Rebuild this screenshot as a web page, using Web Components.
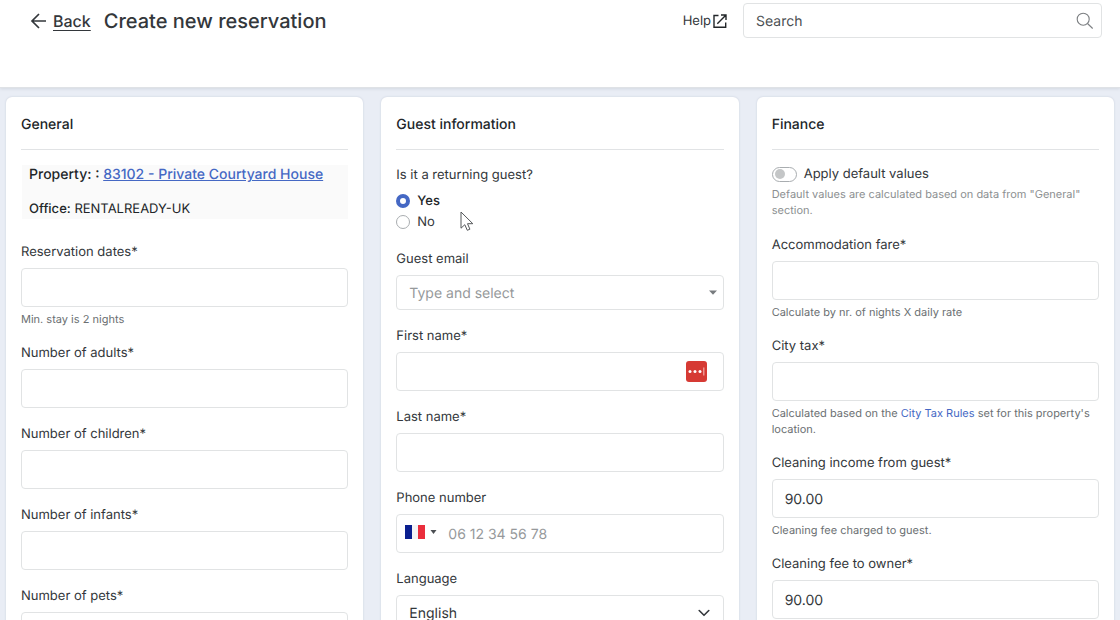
<!DOCTYPE html>
<html lang="en">
<head>
<meta charset="utf-8">
<meta name="viewport" content="width=device-width, initial-scale=1">
<title>Create new reservation</title>
<style>
	body {
		margin: 0;
		font-family: Inter, "Liberation Sans", sans-serif;
		text-rendering: geometricPrecision;
		color: #33373b;
	}
</style>
</head>
<body>
<rr-reservation-app></rr-reservation-app>

<script>
const controlStyles = `
	* { box-sizing: border-box; }
	label, legend {
		font-size: 13px;
		line-height: 22px;
	}
	.box {
		display: flex;
		align-items: center;
		height: 39px;
		margin-top: 5px;
		border: 1px solid #e1e3e4;
		border-radius: 4px;
		background: #fff;
	}
	.box.compact { height: 35px; }
	input, select {
		flex: 1;
		min-width: 0;
		height: 100%;
		padding: 2px 12px 0;
		border: 0;
		outline: 0;
		background: none;
		font: inherit;
		font-size: 14px;
		text-rendering: inherit;
		color: #33373b;
	}
	input::placeholder { color: #96999b; opacity: 1; }
`;

class RrPageHeader extends HTMLElement {
	constructor() {
		super();
		this.attachShadow({ mode: "open" });
	}

	connectedCallback() {
		this.shadowRoot.innerHTML = `
			<style>
				* { box-sizing: border-box; }
				:host {
					display: flex;
					align-items: flex-start;
					gap: 16px;
					padding: 3px 18px 48px 30px;
					background: #fff;
					border-bottom: 1px solid #dfe2e6;
					box-shadow: 0 1px 3px rgba(60, 70, 90, 0.12);
					position: relative;
				}
				.heading {
					display: flex;
					align-items: center;
					gap: 13px;
					flex: 1;
					height: 36px;
				}
				a { color: inherit; }
				.back {
					display: flex;
					align-items: center;
					gap: 6px;
					font-size: 16px;
					font-weight: 500;
					text-underline-offset: 3px;
				}
				h1 {
					margin: 0;
					font-size: 20px;
					line-height: 24px;
					font-weight: 500;
					white-space: nowrap;
				}
				.help {
					display: flex;
					align-items: center;
					gap: 2px;
					height: 35px;
					font-size: 13px;
					text-decoration: none;
				}
				form {
					display: flex;
					align-items: center;
					flex: 0 1 359px;
					height: 35px;
					border: 1px solid #e1e3e4;
					border-radius: 4px;
				}
				input {
					flex: 1;
					min-width: 0;
					height: 100%;
					padding: 2px 12px 0;
					border: 0;
					outline: 0;
					background: none;
					font: inherit;
					font-size: 14px;
					text-rendering: inherit;
				}
				input::placeholder { color: #4b4f53; opacity: 1; }
				button {
					display: flex;
					padding: 0 7px;
					border: 0;
					background: none;
				}
				svg { display: block; flex: none; }
			</style>
			<div class="heading">
				<a class="back" href="#back">
					<svg width="17" height="18" viewBox="0 0 17 18" fill="none" stroke="#33373b" stroke-width="1.7"><path d="M16 9H2.2M9 2L2 9l7 7"/></svg>
					<span>Back</span>
				</a>
				<h1><slot></slot></h1>
			</div>
			<a class="help" href="#help">
				<span>Help</span>
				<svg width="14" height="14" viewBox="0 0 14 14" fill="none" stroke="#222629" stroke-width="1.4"><path d="M5.5 1.5H1v11.7h11.7V8.5M8 1h5v5M13 1L4.3 9.7"/></svg>
			</a>
			<form role="search">
				<input type="text" placeholder="Search" aria-label="Search">
				<button type="button" aria-label="Submit search">
					<svg width="18" height="18" viewBox="0 0 18 18" fill="none" stroke="#7c7f82" stroke-width="1.1"><circle cx="7.2" cy="7.2" r="6"/><path d="M11.5 11.5l5.2 5"/></svg>
				</button>
			</form>
		`;
	}
}
customElements.define("rr-page-header", RrPageHeader);

class RrCard extends HTMLElement {
	constructor() {
		super();
		this.attachShadow({ mode: "open" });
	}

	connectedCallback() {
		this.shadowRoot.innerHTML = `
			<style>
				:host {
					display: block;
					padding: 15px;
					background: #fff;
					border-radius: 6px;
					box-shadow: 0 0 2px rgba(70, 85, 120, 0.22);
				}
				h2 {
					margin: 0 0 14px;
					padding: 3px 0 14px;
					border-bottom: 1px solid #e1e3e5;
					font-size: 14px;
					line-height: 20px;
					font-weight: 500;
					color: #222629;
				}
				.body {
					display: flex;
					flex-direction: column;
					gap: 15px;
				}
			</style>
			<h2>${this.getAttribute("heading")}</h2>
			<div class="body"><slot></slot></div>
		`;
	}
}
customElements.define("rr-card", RrCard);

class RrPropertySummary extends HTMLElement {
	constructor() {
		super();
		this.attachShadow({ mode: "open" });
	}

	connectedCallback() {
		this.shadowRoot.innerHTML = `
			<style>
				:host {
					display: flex;
					flex-direction: column;
					gap: 14px;
					margin: 1px 0 7px 1px;
					padding: 0 7px;
					background: #fafafa;
					font-size: 13px;
					line-height: 20px;
					color: #222629;
				}
				b { font-weight: 500; }
				.property {
					font-size: 14px;
					font-weight: 500;
				}
				a { color: #4568c4; }
			</style>
			<div class="property"><b>Property: :</b> <a href="#property">${this.getAttribute("property")}</a></div>
			<div><b>Office:</b> ${this.getAttribute("office")}</div>
		`;
	}
}
customElements.define("rr-property-summary", RrPropertySummary);

// Text field; anything slotted in becomes the hint below the box.
class RrField extends HTMLElement {
	constructor() {
		super();
		this.attachShadow({ mode: "open" });
	}

	connectedCallback() {
		const hasHint = this.textContent.trim() !== "";
		this.shadowRoot.innerHTML = `
			<style>
				${controlStyles}
				:host { display: block; }
				label { display: block; }
				.hint {
					margin-top: 4px;
					font-size: 11px;
					line-height: 16px;
					color: #6b6f72;
				}
				::slotted(a) { color: #4568c4; text-decoration: none; }
				.manager { flex: none; margin-right: 16px; }
			</style>
			<label for="control">${this.getAttribute("label")}</label>
			<div class="box">
				<input id="control" type="text" value="${this.getAttribute("value") || ""}">
				${this.hasAttribute("manager") ? `
				<svg class="manager" width="21" height="21" viewBox="0 0 21 21">
					<rect width="21" height="21" rx="3" fill="#d63a34"/>
					<g fill="#fff"><circle cx="4" cy="10.5" r="1.5"/><circle cx="9" cy="10.5" r="1.5"/><circle cx="14" cy="10.5" r="1.5"/></g>
					<path d="M17.8 6.5v8" stroke="#f3aaa7" stroke-width="1.2"/>
				</svg>` : ""}
			</div>
			${hasHint ? `<div class="hint"><slot></slot></div>` : ""}
		`;
	}
}
customElements.define("rr-field", RrField);

class RrCombobox extends HTMLElement {
	constructor() {
		super();
		this.attachShadow({ mode: "open" });
	}

	connectedCallback() {
		this.shadowRoot.innerHTML = `
			<style>
				${controlStyles}
				:host { display: block; }
				label { display: block; }
				svg { flex: none; margin-right: 6px; }
			</style>
			<label for="control">${this.getAttribute("label")}</label>
			<div class="box compact">
				<input id="control" type="text" role="combobox" aria-expanded="false" placeholder="${this.getAttribute("placeholder")}">
				<svg width="8" height="5" viewBox="0 0 8 5"><path d="M0 0.5h8L4 4.8z" fill="#777b7e"/></svg>
			</div>
		`;
	}
}
customElements.define("rr-combobox", RrCombobox);

class RrPhoneField extends HTMLElement {
	constructor() {
		super();
		this.attachShadow({ mode: "open" });
	}

	connectedCallback() {
		this.shadowRoot.innerHTML = `
			<style>
				${controlStyles}
				:host { display: block; }
				label { display: block; }
				button {
					display: flex;
					align-items: center;
					gap: 5px;
					padding: 0 0 3px 8px;
					border: 0;
					background: none;
				}
				input { padding-left: 11px; }
			</style>
			<label for="control">${this.getAttribute("label")}</label>
			<div class="box">
				<button type="button" aria-label="Country: France">
					<svg width="20" height="14" viewBox="0 0 20 14">
						<rect width="20" height="14" fill="#f4f4f6"/>
						<rect width="7" height="14" fill="#0a1f8f"/>
						<rect x="13" width="7" height="14" fill="#ea2e3c"/>
					</svg>
					<svg width="7" height="4" viewBox="0 0 7 4"><path d="M0.5 0h6L3.5 4z" fill="#4b4f53"/></svg>
				</button>
				<input id="control" type="tel" placeholder="${this.getAttribute("placeholder")}">
			</div>
		`;
	}
}
customElements.define("rr-phone-field", RrPhoneField);

class RrSelect extends HTMLElement {
	constructor() {
		super();
		this.attachShadow({ mode: "open" });
	}

	connectedCallback() {
		const options = this.getAttribute("options").split(",");
		this.shadowRoot.innerHTML = `
			<style>
				${controlStyles}
				:host { display: block; }
				label { display: block; }
				.box { display: grid; }
				select, svg { grid-area: 1 / 1; }
				select { appearance: none; width: 100%; }
				svg { justify-self: end; margin-right: 13px; pointer-events: none; }
			</style>
			<label for="control">${this.getAttribute("label")}</label>
			<div class="box compact">
				<select id="control">${options.map((name) => `<option>${name}</option>`).join("")}</select>
				<svg width="12" height="8" viewBox="0 0 12 8" fill="none" stroke="#33373b" stroke-width="1.6" stroke-linecap="round" stroke-linejoin="round"><path d="M1.2 1.5L6 6.3l4.8-4.8"/></svg>
			</div>
		`;
	}
}
customElements.define("rr-select", RrSelect);

class RrRadioGroup extends HTMLElement {
	constructor() {
		super();
		this.attachShadow({ mode: "open" });
	}

	connectedCallback() {
		const options = this.getAttribute("options").split(",");
		this.shadowRoot.innerHTML = `
			<style>
				* { box-sizing: border-box; }
				:host { display: block; }
				fieldset { margin: 0; padding: 0 0 1px; border: 0; }
				legend {
					padding: 0 0 4px;
					font-size: 13px;
					line-height: 22px;
				}
				label {
					display: flex;
					align-items: center;
					gap: 7px;
					height: 21px;
					font-size: 13px;
				}
				input {
					appearance: none;
					width: 14px;
					height: 14px;
					margin: 0;
					border: 1px solid #a9adb0;
					border-radius: 50%;
				}
				input:checked { border: 4px solid #4568c4; }
				input:checked + span { font-weight: 500; color: #222629; }
			</style>
			<fieldset>
				<legend>${this.getAttribute("label")}</legend>
				${options.map((name, i) => `
					<label><input type="radio" name="choice" ${i === 0 ? "checked" : ""}><span>${name}</span></label>
				`).join("")}
			</fieldset>
		`;
	}
}
customElements.define("rr-radio-group", RrRadioGroup);

class RrToggle extends HTMLElement {
	constructor() {
		super();
		this.attachShadow({ mode: "open" });
	}

	connectedCallback() {
		this.shadowRoot.innerHTML = `
			<style>
				* { box-sizing: border-box; }
				:host { display: block; }
				label {
					display: flex;
					align-items: center;
					gap: 7px;
					font-size: 13px;
					line-height: 20px;
				}
				input {
					appearance: none;
					display: flex;
					align-items: center;
					width: 25px;
					height: 15px;
					margin: 0;
					padding: 0 2px;
					border: 1px solid #a9adb0;
					border-radius: 8px;
				}
				input::before {
					content: "";
					width: 10px;
					height: 10px;
					border-radius: 50%;
					background: #c4c6c7;
				}
				input:checked { justify-content: flex-end; }
				.hint {
					padding: 2px 0 1px;
					font-size: 11px;
					line-height: 16px;
					color: #8c8f91;
				}
			</style>
			<label><input type="checkbox" role="switch"><span>${this.getAttribute("label")}</span></label>
			<div class="hint"><slot></slot></div>
		`;
	}
}
customElements.define("rr-toggle", RrToggle);

class RrPointer extends HTMLElement {
	constructor() {
		super();
		this.attachShadow({ mode: "open" });
	}

	connectedCallback() {
		this.shadowRoot.innerHTML = `
			<style>
				:host {
					position: absolute;
					pointer-events: none;
				}
				svg { display: block; }
			</style>
			<svg width="15" height="21" viewBox="0 0 15 21" fill="#fff" stroke="#55585b" stroke-width="1"><path d="M1 1v16.2l3.8-3.5 2.5 5.6 2.6-1.1-2.4-5.5h5.3z"/></svg>
		`;
	}
}
customElements.define("rr-pointer", RrPointer);

class RrReservationApp extends HTMLElement {
	constructor() {
		super();
		this.attachShadow({ mode: "open" });
	}

	connectedCallback() {
		this.shadowRoot.innerHTML = `
			<style>
				:host {
					display: flex;
					flex-direction: column;
					height: 100vh;
					overflow: hidden;
					position: relative;
					background: #e9edf5;
				}
				main {
					display: grid;
					grid-template-columns: repeat(3, minmax(0, 1fr));
					gap: 18px;
					padding: 9px 6px;
				}
				rr-pointer { left: 460px; top: 211px; }
			</style>
			<rr-page-header>Create new reservation</rr-page-header>
			<main>
				<rr-card heading="General">
					<rr-property-summary property="83102 - Private Courtyard House" office="RENTALREADY-UK"></rr-property-summary>
					<rr-field label="Reservation dates*">Min. stay is 2 nights</rr-field>
					<rr-field label="Number of adults*"></rr-field>
					<rr-field label="Number of children*"></rr-field>
					<rr-field label="Number of infants*"></rr-field>
					<rr-field label="Number of pets*"></rr-field>
				</rr-card>
				<rr-card heading="Guest information">
					<rr-radio-group label="Is it a returning guest?" options="Yes,No"></rr-radio-group>
					<rr-combobox label="Guest email" placeholder="Type and select"></rr-combobox>
					<rr-field label="First name*" manager></rr-field>
					<rr-field label="Last name*"></rr-field>
					<rr-phone-field label="Phone number" placeholder="06 12 34 56 78"></rr-phone-field>
					<rr-select label="Language" options="English"></rr-select>
				</rr-card>
				<rr-card heading="Finance">
					<rr-toggle label="Apply default values">Default values are calculated based on data from "General" section.</rr-toggle>
					<rr-field label="Accommodation fare*">Calculate by nr. of nights X daily rate</rr-field>
					<rr-field label="City tax*">Calculated based on the <a href="#tax-rules">City Tax Rules</a> set for this property's location.</rr-field>
					<rr-field label="Cleaning income from guest*" value="90.00">Cleaning fee charged to guest.</rr-field>
					<rr-field label="Cleaning fee to owner*" value="90.00"></rr-field>
				</rr-card>
			</main>
			<rr-pointer></rr-pointer>
		`;
	}
}
customElements.define("rr-reservation-app", RrReservationApp);
</script>
</body>
</html>
